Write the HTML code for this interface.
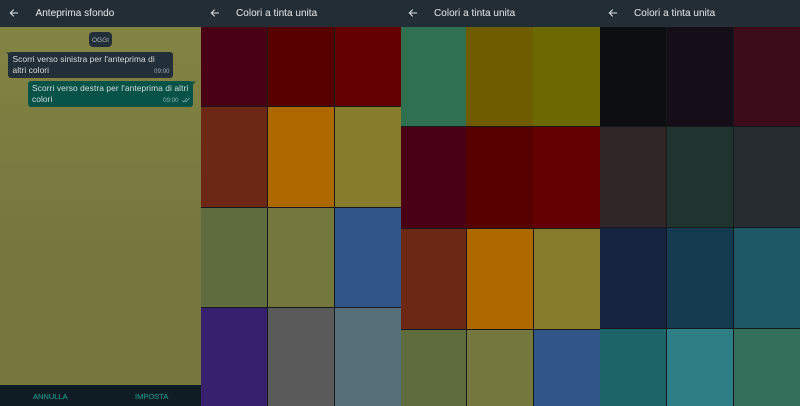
<!DOCTYPE html>
<html>
<head>
<meta charset="utf-8">
<style>
html,body{margin:0;padding:0;background:#15191b}
body{width:800px;height:406px;position:relative;overflow:hidden;font-family:"Liberation Sans",sans-serif}
.abs,.c{position:absolute}
.bar{position:absolute;top:0;height:27px;background:#232d36}
.t{position:absolute;top:6.5px;font-size:10px;line-height:13px;color:#d6dcdf;white-space:nowrap;letter-spacing:.03px;-webkit-text-stroke:.1px #d6dcdf}
svg{position:absolute}
.m{position:absolute;font-size:8.4px;line-height:11px;color:#d8dcde;white-space:nowrap;letter-spacing:.06px}
.tm{position:absolute;font-size:6.2px;line-height:8px;color:#9aa8ac;white-space:nowrap}
.b{position:absolute;top:391.500px;font-size:7.500px;line-height:9px;color:#1f8578;-webkit-text-stroke:.25px #1f8578;white-space:nowrap}
</style>
</head>
<body>
<!-- Panel 1 -->
<div class="abs" style="left:0;top:27px;width:201px;height:358px;background:linear-gradient(#838343 0,#75773e 60%,#75773e 100%)"></div>
<div class="abs" style="left:0;top:385px;width:201px;height:21px;background:#0f1c24"></div>
<div class="bar" style="left:0;width:201px"></div>
<svg style="left:9px;top:8px" width="10" height="10" viewBox="0 0 10 10"><path d="M9 5H1.600M4.700 1.600 1.300 5l3.400 3.400" fill="none" stroke="#dfe3e5" stroke-width="1"/></svg>
<div class="t" style="left:35.500px;">Anteprima sfondo</div>

<div class="abs" style="left:89px;top:32px;width:23px;height:15px;background:#232f38;border-radius:4px"></div>
<div class="abs" style="left:89px;top:36.500px;width:23px;text-align:center;font-size:6.500px;line-height:8px;color:#aeb6b9">OGGI</div>

<svg style="left:5px;top:52px" width="8" height="7" viewBox="0 0 8 7"><path d="M1 0.500H8V7Z" fill="#232f38"/></svg>
<div class="abs" style="left:8px;top:52px;width:165px;height:26px;background:#232f38;border-radius:3px"></div>
<div class="m" style="left:12.500px;top:54px">Scorri verso sinistra per l'anteprima di</div>
<div class="m" style="left:12.500px;top:65px">altri colori</div>
<div class="tm" style="left:154px;top:68px">09:00</div>

<svg style="left:189px;top:81px" width="8" height="7" viewBox="0 0 8 7"><path d="M7 0.500H0V7Z" fill="#075347"/></svg>
<div class="abs" style="left:28px;top:81px;width:165px;height:26px;background:#075347;border-radius:3px"></div>
<div class="m" style="left:32px;top:83px;letter-spacing:.09px">Scorri verso destra per l'anteprima di altri</div>
<div class="m" style="left:32px;top:94px">colori</div>
<div class="tm" style="left:163px;top:97px;color:#8fb0ac">09:00</div>
<svg style="left:181.500px;top:96px" width="9" height="8" viewBox="0 0 9 8"><path d="M0.500 4.500 1.800 6 4.800 2M3.200 5.500 3.900 6 7.500 2" fill="none" stroke="#9fb8b6" stroke-width=".6"/></svg>

<div class="b" style="left:33px">ANNULLA</div>
<div class="b" style="left:135px">IMPOSTA</div>

<!-- Panel 2 -->
<div class="bar" style="left:201px;width:199px"></div>
<svg style="left:210px;top:8px" width="10" height="10" viewBox="0 0 10 10"><path d="M9 5H1.600M4.700 1.600 1.300 5l3.400 3.400" fill="none" stroke="#dfe3e5" stroke-width="1"/></svg>
<div class="t" style="left:236px">Colori a tinta unita</div>
<div class="c" style="left:201px;top:27px;width:66px;height:79px;background:#4a0014"></div>
<div class="c" style="left:268px;top:27px;width:66px;height:79px;background:#570000"></div>
<div class="c" style="left:335px;top:27px;width:66px;height:79px;background:#640000"></div>
<div class="c" style="left:201px;top:107px;width:66px;height:100px;background:#6d2815"></div>
<div class="c" style="left:268px;top:107px;width:66px;height:100px;background:#ae6800"></div>
<div class="c" style="left:335px;top:107px;width:66px;height:100px;background:#867c2c"></div>
<div class="c" style="left:201px;top:208px;width:66px;height:99px;background:#5e6c3e"></div>
<div class="c" style="left:268px;top:208px;width:66px;height:99px;background:#75783e"></div>
<div class="c" style="left:335px;top:208px;width:66px;height:99px;background:#305688"></div>
<div class="c" style="left:201px;top:308px;width:66px;height:98px;background:#37206e"></div>
<div class="c" style="left:268px;top:308px;width:66px;height:98px;background:#5a5a5a"></div>
<div class="c" style="left:335px;top:308px;width:66px;height:98px;background:#56707a"></div>

<!-- Panel 3 -->
<div class="bar" style="left:400px;width:200px"></div>
<svg style="left:408px;top:8px" width="10" height="10" viewBox="0 0 10 10"><path d="M9 5H1.600M4.700 1.600 1.300 5l3.400 3.400" fill="none" stroke="#dfe3e5" stroke-width="1"/></svg>
<div class="t" style="left:434px">Colori a tinta unita</div>
<div class="c" style="left:401px;top:27px;width:65px;height:99px;background:#2e7050"></div>
<div class="c" style="left:466px;top:27px;width:67px;height:99px;background:#6f5c00"></div>
<div class="c" style="left:533px;top:27px;width:67px;height:99px;background:#6c6900"></div>
<div class="c" style="left:401px;top:127px;width:65px;height:101px;background:#4a0014"></div>
<div class="c" style="left:466px;top:127px;width:67px;height:101px;background:#570000"></div>
<div class="c" style="left:533px;top:127px;width:67px;height:101px;background:#640000"></div>
<div class="c" style="left:401px;top:229px;width:65px;height:100px;background:#6d2815"></div>
<div class="c" style="left:467px;top:229px;width:66px;height:100px;background:#ae6800"></div>
<div class="c" style="left:534px;top:229px;width:66px;height:100px;background:#867c2c"></div>
<div class="c" style="left:401px;top:330px;width:65px;height:76px;background:#5e6c3e"></div>
<div class="c" style="left:467px;top:330px;width:66px;height:76px;background:#75783e"></div>
<div class="c" style="left:534px;top:330px;width:66px;height:76px;background:#305688"></div>

<!-- Panel 4 -->
<div class="bar" style="left:600px;width:200px"></div>
<svg style="left:608px;top:8px" width="10" height="10" viewBox="0 0 10 10"><path d="M9 5H1.600M4.700 1.600 1.300 5l3.400 3.400" fill="none" stroke="#dfe3e5" stroke-width="1"/></svg>
<div class="t" style="left:634px">Colori a tinta unita</div>
<div class="c" style="left:600px;top:27px;width:66px;height:99px;background:#0c0e10"></div>
<div class="c" style="left:667px;top:27px;width:66px;height:99px;background:#150d18"></div>
<div class="c" style="left:734px;top:27px;width:66px;height:99px;background:#3c0c1a"></div>
<div class="c" style="left:600px;top:127px;width:66px;height:100px;background:#302527"></div>
<div class="c" style="left:667px;top:127px;width:66px;height:100px;background:#21332f"></div>
<div class="c" style="left:734px;top:127px;width:66px;height:100px;background:#272c30"></div>
<div class="c" style="left:600px;top:228px;width:66px;height:100px;background:#15233f"></div>
<div class="c" style="left:667px;top:228px;width:66px;height:100px;background:#143a50"></div>
<div class="c" style="left:734px;top:228px;width:66px;height:100px;background:#1c5763"></div>
<div class="c" style="left:600px;top:329px;width:66px;height:77px;background:#1c6468"></div>
<div class="c" style="left:667px;top:329px;width:66px;height:77px;background:#2e7f85"></div>
<div class="c" style="left:734px;top:329px;width:66px;height:77px;background:#346f5b"></div>
</body>
</html>
